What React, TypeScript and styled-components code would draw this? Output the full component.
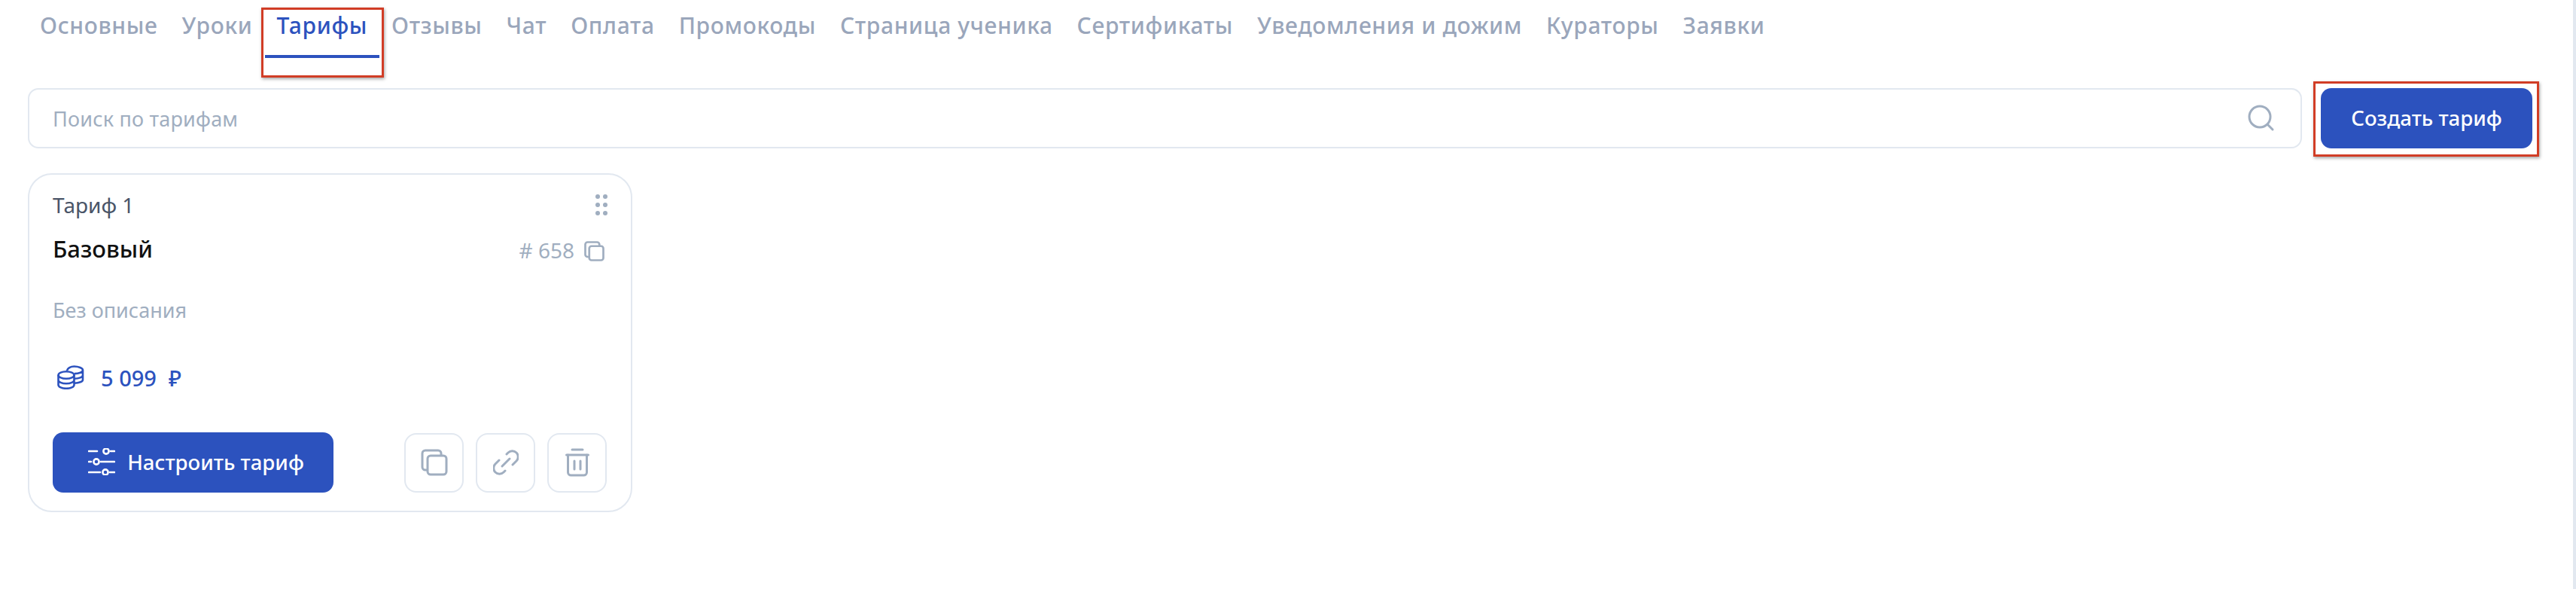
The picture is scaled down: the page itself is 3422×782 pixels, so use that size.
import React from 'react';
import styled, { createGlobalStyle } from 'styled-components';

const BLUE = '#2c52be';
const LINE = '#e2e8f0';
const MUTED = '#a0aec0';
const TAB_TEXT = '#9aa6bb';
const MARK = '#d13d26';

const GlobalStyle = createGlobalStyle`
  html, body {
    margin: 0;
    background: #fff;
    font-family: "Noto Sans", "Open Sans", sans-serif;
  }
  * { box-sizing: border-box; }
`;

const Page = styled.div`
  display: flex;
  width: 3422px;
  height: 782px;
  overflow: hidden;
`;

const Content = styled.main`
  flex: 1;
  padding: 0 54px 0 37px;
`;

const Strip = styled.div`
  width: 4px;
  background: ${LINE};
`;

const Tabs = styled.nav`
  display: flex;
  height: 77px;
`;

const Tab = styled.div<{ $active?: boolean }>`
  position: relative;
  height: 77px;
  padding: 13px 16px 0;
  font-size: 30px;
  line-height: 42px;
  letter-spacing: 0.65px;
  font-weight: 500;
  color: ${({ $active }) => ($active ? BLUE : TAB_TEXT)};
  border-bottom: 4px solid ${({ $active }) => ($active ? BLUE : 'transparent')};
  border-radius: 4px 4px 0 0;
  white-space: nowrap;
`;

const Mark = styled.span<{ $t: number; $r: number; $b: number; $l: number }>`
  position: absolute;
  top: ${({ $t }) => $t}px;
  right: ${({ $r }) => $r}px;
  bottom: ${({ $b }) => $b}px;
  left: ${({ $l }) => $l}px;
  border: 3px solid ${MARK};
  box-shadow: 1px 2px 4px rgba(0, 0, 0, 0.35);
  pointer-events: none;
`;

const Toolbar = styled.div`
  display: flex;
  gap: 25px;
  margin-top: 40px;
`;

const Search = styled.div`
  flex: 1;
  height: 80px;
  display: flex;
  align-items: center;
  justify-content: space-between;
  padding: 0 34px 0 31px;
  border: 2px solid ${LINE};
  border-radius: 14px;
  font-size: 27px;
  letter-spacing: 0.2px;
  color: ${MUTED};
`;

const PrimaryButton = styled.button<{ $width: number; $shift?: number }>`
  position: relative;
  width: ${({ $width }) => $width}px;
  height: 80px;
  display: flex;
  align-items: center;
  justify-content: center;
  gap: 16px;
  padding: 0 0 2px ${({ $shift }) => $shift ?? 0}px;
  border: 0;
  border-radius: 14px;
  background: ${BLUE};
  color: #fff;
  font-family: inherit;
  font-size: 27.6px;
  font-weight: 500;
`;

const Card = styled.section`
  width: 803px;
  height: 450px;
  margin-top: 33px;
  padding: 20px 31px 22px;
  border: 2px solid ${LINE};
  border-radius: 32px;
`;

const Row = styled.div<{ $mt?: number }>`
  display: flex;
  align-items: center;
  justify-content: space-between;
  height: 40px;
  margin-top: ${({ $mt }) => $mt ?? 0}px;
`;

const Label = styled.span`
  font-size: 28px;
  color: #4a5568;
`;

const Title = styled.span`
  font-size: 31px;
  font-weight: 500;
  color: #111;
`;

const Description = styled.div`
  height: 40px;
  margin-top: 42px;
  font-size: 27px;
  line-height: 40px;
  color: ${MUTED};
`;

const IdBlock = styled.span`
  display: flex;
  align-items: center;
  gap: 13px;
  padding: 3px 4px 0 0;
  font-size: 28px;
  color: ${MUTED};

  svg {
    margin-top: 4px;
  }
`;

const Price = styled.div`
  display: flex;
  align-items: center;
  height: 40px;
  margin-top: 49px;
  padding-left: 6px;
  font-size: 29px;
  font-weight: 500;
  color: ${BLUE};
`;

const PriceValue = styled.span`
  margin-left: 22px;
`;

const Currency = styled.span`
  margin-left: 16px;
`;

const Actions = styled.div`
  display: flex;
  align-items: center;
  justify-content: space-between;
  margin-top: 53px;
`;

const IconGroup = styled.div`
  display: flex;
  gap: 16px;
  margin-right: 1px;
`;

const IconButton = styled.button`
  width: 79px;
  height: 79px;
  display: flex;
  align-items: center;
  justify-content: center;
  padding: 0;
  background: #fff;
  border: 2px solid ${LINE};
  border-radius: 16px;
`;

const SearchIcon = () => (
  <svg width="36" height="36" viewBox="0 0 36 36" fill="none" stroke={MUTED} strokeWidth="3" strokeLinecap="round">
    <circle cx="16" cy="16" r="14" />
    <path d="M26.5 26.5L33 33" />
  </svg>
);

const CopyIcon = ({ size }: { size: number }) => (
  <svg width={size} height={size} viewBox="0 0 36 36" fill="none" stroke={MUTED} strokeWidth={size > 30 ? 3 : 3.6}>
    <path d="M8 28H6a4 4 0 0 1-4-4V6a4 4 0 0 1 4-4h17a4 4 0 0 1 4 4v2" />
    <rect x="9" y="9" width="25" height="25" rx="4" />
  </svg>
);

const LinkIcon = () => (
  <svg width="34" height="34" viewBox="0 0 34 34" fill="none" stroke={MUTED} strokeWidth="3" strokeLinecap="round">
    <path d="M20 7l2-2a7.8 7.8 0 0 1 11 0 7.8 7.8 0 0 1 0 11l-5 5" transform="translate(-2 -1)" />
    <path d="M14 27l-2 2a7.8 7.8 0 0 1-11 0 7.8 7.8 0 0 1 0-11l5-5" transform="translate(2 1)" />
    <path d="M12 22L22 12" />
  </svg>
);

const TrashIcon = () => (
  <svg width="32" height="38" viewBox="0 0 32 38" fill="none" stroke={MUTED} strokeWidth="3" strokeLinecap="round">
    <path d="M9 2h14M1.5 9h29" />
    <path d="M3.5 9v23a4 4 0 0 0 4 4h17a4 4 0 0 0 4-4V9" />
    <path d="M12 17v11M20 17v11" />
  </svg>
);

const SlidersIcon = () => (
  <svg width="36" height="36" viewBox="0 0 36 36" fill="none" stroke="#fff" strokeWidth="2.6" strokeLinecap="round">
    <path d="M1 4h11M30 4h5M1 18h3M17 18h18M1 32h15M29 32h6" />
    <circle cx="24" cy="4" r="3.6" />
    <circle cx="11" cy="18" r="3.6" />
    <circle cx="23" cy="32" r="3.6" />
  </svg>
);

const CoinsIcon = () => (
  <svg width="36" height="32" viewBox="0 0 36 32" fill="none" stroke={BLUE} strokeWidth="2.6">
    <ellipse cx="12" cy="13" rx="10.5" ry="4.8" />
    <path d="M1.5 13v13c0 2.7 4.7 4.8 10.500 4.800s10.500-2.100 10.500-4.800V13M1.500 19.500c0 2.700 4.700 4.800 10.500 4.800s10.500-2.100 10.500-4.800" />
    <path d="M13 7c.6-3 4.600-5.500 9.500-5.500 6 0 11.500 2.200 11.500 4.800v13c0 2.400-5 4.200-11 4.400M34 6.300c0 2.700-5 4.800-11 4.800M34 13c0 2.700-5 4.800-11.500 4.800" />
  </svg>
);

const DragIcon = () => (
  <svg width="16" height="28" viewBox="0 0 16 28" fill={MUTED}>
    <circle cx="3" cy="3" r="3" />
    <circle cx="13" cy="3" r="3" />
    <circle cx="3" cy="14" r="3" />
    <circle cx="13" cy="14" r="3" />
    <circle cx="3" cy="25" r="3" />
    <circle cx="13" cy="25" r="3" />
  </svg>
);

const tabs = ['Основные', 'Уроки', 'Тарифы', 'Отзывы', 'Чат', 'Оплата', 'Промокоды', 'Страница ученика', 'Сертификаты', 'Уведомления и дожим', 'Кураторы', 'Заявки'];

const App: React.FC = () => {
  return (
    <Page>
      <GlobalStyle />
      <Content>
        <Tabs>
          {tabs.map((tab) => (
            <Tab key={tab} $active={tab === 'Тарифы'}>
              {tab}
              {tab === 'Тарифы' && <Mark $t={10} $r={-6} $b={-30} $l={-5} />}
            </Tab>
          ))}
        </Tabs>
        <Toolbar>
          <Search>
            Поиск по тарифам
            <SearchIcon />
          </Search>
          <PrimaryButton $width={281}>
            Создать тариф
            <Mark $t={-9} $r={-9} $b={-11} $l={-10} />
          </PrimaryButton>
        </Toolbar>
        <Card>
          <Row>
            <Label>Тариф 1</Label>
            <DragIcon />
          </Row>
          <Row $mt={18}>
            <Title>Базовый</Title>
            <IdBlock>
              # 658
              <CopyIcon size={27} />
            </IdBlock>
          </Row>
          <Description>Без описания</Description>
          <Price>
            <CoinsIcon />
            <PriceValue>5 099</PriceValue>
            <Currency>₽</Currency>
          </Price>
          <Actions>
            <PrimaryButton $width={373} $shift={8}>
              <SlidersIcon />
              Настроить тариф
            </PrimaryButton>
            <IconGroup>
              <IconButton><CopyIcon size={36} /></IconButton>
              <IconButton><LinkIcon /></IconButton>
              <IconButton><TrashIcon /></IconButton>
            </IconGroup>
          </Actions>
        </Card>
      </Content>
      <Strip />
    </Page>
  );
};

export default App;
